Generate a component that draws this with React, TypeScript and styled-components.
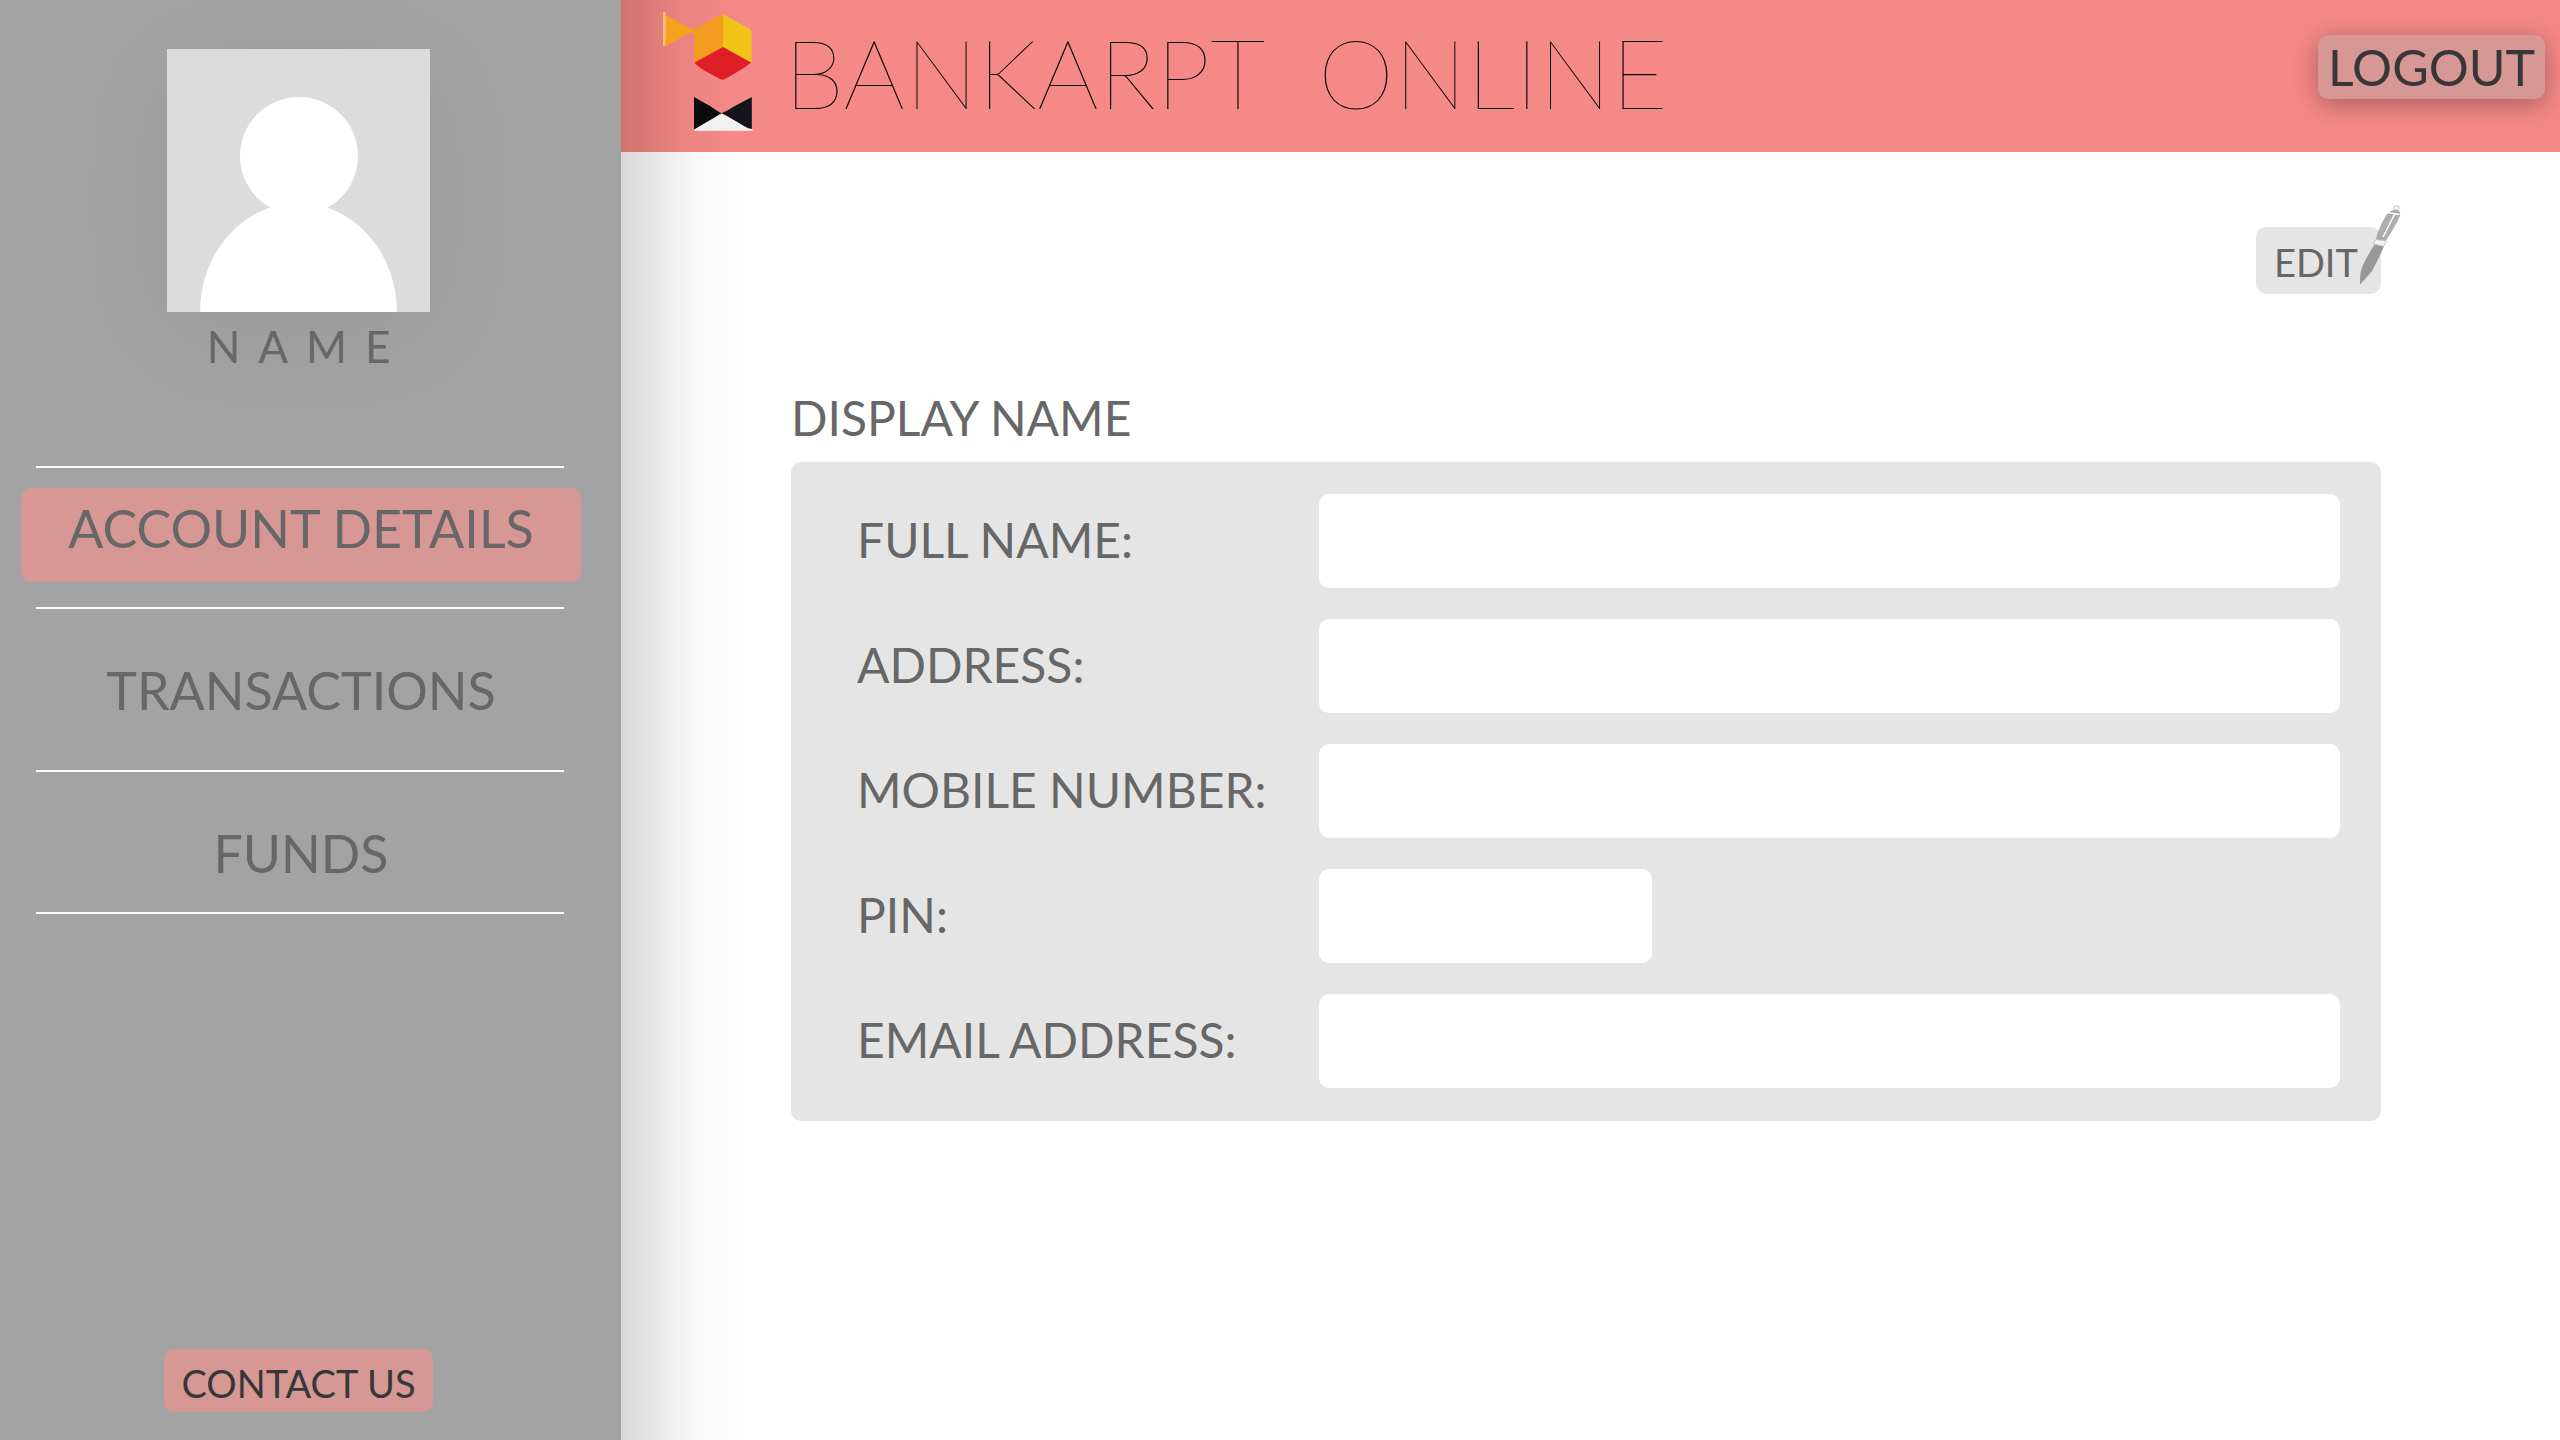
import React from "react";
import styled, { createGlobalStyle } from "styled-components";

const color = {
  side: "#a3a3a3",
  brand: "#f58987",
  accent: "#d69795",
  panel: "#e5e5e5",
  text: "#676767",
  dark: "#373737",
};

const edgeShade = `linear-gradient(
  to right,
  rgba(0, 0, 0, 0.155) 0,
  rgba(0, 0, 0, 0.12) 20px,
  rgba(0, 0, 0, 0.084) 40px,
  rgba(0, 0, 0, 0.048) 60px,
  rgba(0, 0, 0, 0.024) 80px,
  rgba(0, 0, 0, 0.01) 100px,
  rgba(0, 0, 0, 0) 130px
)`;

const GlobalStyle = createGlobalStyle`
  *, *::before, *::after { box-sizing: border-box; }
  body {
    margin: 0;
    background: #fff;
    color: ${color.text};
    font-family: Lato, "Open Sans", sans-serif;
  }
  button, input { font: inherit; color: inherit; border: 0; }
  button { cursor: pointer; }
`;

const Page = styled.div`
  display: grid;
  grid-template-columns: 621px minmax(0, 1fr);
  min-height: 100vh;
`;

const Sidebar = styled.aside`
  display: flex;
  flex-direction: column;
  align-items: center;
  padding: 49px 44px 28px 20px;
  background: ${color.side};
`;

const Avatar = styled.svg`
  display: block;
  width: 263px;
  height: 263px;
  background: #dcdcdc;
  box-shadow: 0 20px 110px rgba(0, 0, 0, 0.06);
`;

const UserName = styled.p`
  margin: 6px 0 92px;
  padding-left: 18px;
  font-size: 44px;
  line-height: 56px;
  letter-spacing: 18px;
`;

const Nav = styled.nav`
  align-self: stretch;
`;

const NavList = styled.ul`
  margin: 0 13px 0 16px;
  padding: 0;
  list-style: none;
  border-top: 2px solid #fff;
`;

const NavItem = styled.li<{ $above: number; $below: number }>`
  padding: ${(p) => p.$above}px 0 ${(p) => p.$below}px;
  border-bottom: 2px solid #fff;
`;

const NavLink = styled.a<{ $active?: boolean }>`
  display: block;
  height: 94px;
  margin: 0 -17px 0 -15px;
  border-radius: 10px;
  background: ${(p) => (p.$active ? color.accent : "transparent")};
  color: inherit;
  font-size: 52px;
  line-height: 80px;
  text-align: center;
  text-decoration: none;
`;

const Contact = styled.button`
  margin-top: auto;
  height: 63px;
  padding: 5px 17px 0;
  border-radius: 10px;
  background: ${color.accent};
  color: ${color.dark};
  font-size: 38px;
  line-height: 58px;
`;

const Column = styled.div`
  display: flex;
  flex-direction: column;
`;

const Header = styled.header`
  display: flex;
  align-items: center;
  height: 152px;
  padding: 0 15px 8px 42px;
  background: ${edgeShade}, ${color.brand};
`;

const Logo = styled.svg`
  flex: none;
  width: 90px;
  height: 120px;
`;

const Title = styled.h1`
  margin: 0 auto 0 31px;
  color: #000;
  font-size: 97px;
  font-weight: 100;
  line-height: 108px;
  white-space: pre;
`;

const Logout = styled.button`
  height: 64px;
  margin-bottom: 10px;
  padding: 0 10px;
  border-radius: 10px;
  background: ${color.accent};
  box-shadow: 0 5px 26px rgba(0, 0, 0, 0.32);
  color: ${color.dark};
  font-size: 50px;
  line-height: 64px;
`;

const Content = styled.main`
  flex: 1;
  display: flex;
  flex-direction: column;
  padding: 75px 179px 60px 170px;
  background: ${edgeShade}, #fff;
`;

const Edit = styled.button`
  position: relative;
  align-self: flex-end;
  width: 125px;
  height: 67px;
  padding: 0 0 0 18px;
  border-radius: 10px;
  background: ${color.panel};
  font-size: 38px;
  line-height: 70px;
  text-align: left;
`;

const Pen = styled.svg`
  position: absolute;
  right: -20px;
  bottom: 9px;
  width: 42px;
  height: 80px;
`;

const SectionTitle = styled.h2`
  margin: 93px 0 14px;
  font-size: 48px;
  font-weight: 400;
  line-height: 61px;
`;

const Form = styled.form`
  display: flex;
  flex-direction: column;
  gap: 31px;
  padding: 32px 41px 33px 66px;
  border-radius: 10px;
  background: ${color.panel};
`;

const Row = styled.div`
  display: grid;
  grid-template-columns: 462px minmax(0, 1fr);
  align-items: center;
`;

const Label = styled.label`
  padding-bottom: 2px;
  font-size: 48px;
  line-height: 60px;
`;

const Field = styled.input<{ $short?: boolean }>`
  width: ${(p) => (p.$short ? "333px" : "100%")};
  height: 94px;
  padding: 0 24px;
  border-radius: 10px;
  background: #fff;
  font-size: 48px;
`;

const navItems = [
  { label: "ACCOUNT DETAILS", active: true, above: 20, below: 25 },
  { label: "TRANSACTIONS", above: 41, below: 26 },
  { label: "FUNDS", above: 41, below: 5 },
];

const fields = [
  { id: "full-name", label: "FULL NAME:", type: "text" },
  { id: "address", label: "ADDRESS:", type: "text" },
  { id: "mobile", label: "MOBILE NUMBER:", type: "tel" },
  { id: "pin", label: "PIN:", type: "password", short: true },
  { id: "email", label: "EMAIL ADDRESS:", type: "email" },
];

export default function App() {
  return (
    <>
      <GlobalStyle />
      <Page>
        <Sidebar>
          <Avatar viewBox="0 0 263 263" aria-hidden="true">
            <g fill="#fff">
              <circle cx="132" cy="107" r="59" />
              <ellipse cx="131.5" cy="263" rx="98.5" ry="109" />
            </g>
          </Avatar>
          <UserName>NAME</UserName>
          <Nav>
            <NavList>
              {navItems.map((item) => (
                <NavItem key={item.label} $above={item.above} $below={item.below}>
                  <NavLink href="#" $active={item.active}>
                    {item.label}
                  </NavLink>
                </NavItem>
              ))}
            </NavList>
          </Nav>
          <Contact type="button">CONTACT US</Contact>
        </Sidebar>
        <Column>
          <Header>
            <Logo viewBox="13 12 90 120" aria-hidden="true">
              <path d="M13.5 13.5 Q28 22 44 30 L44 33 Q39 32 35 35 Q23 43 15 46 L13.5 46Z" fill="#f5a01f" />
              <path d="M13 12h2.4v3Q16.800 29 15 46H13Z" fill="#f8c07a" />
              <path d="M44 30 L66 17 Q71 14.500 73 14.500 L73 47 L44 62.500Z" fill="#f39c1f" />
              <path d="M73 14.500 Q75 15 78 17 L99 28.500 Q101.500 30 101.500 33 L101.500 62.500 L73 47Z" fill="#f0c417" />
              <path d="M44.500 62.500 L73 47 L101 62.500 Q96 67 88 71.500 L75 79 Q72.500 80.500 70 79 L56 71.500 Q48 67 44.500 62.500Z" fill="#df1f26" />
              <path d="M44 130.700 L44 129.500 L69 115 Q72 113.200 75 115 L95 126.500 Q98 128.500 102 129 L103 130.700Z" fill="#f2f2f2" />
              <path d="M44 97 L60 106 Q67 111 71.500 113.300 L44 129.500Z" fill="#0a0b0c" />
              <path d="M101.800 97 L101.800 129 Q98 128.500 94 126 L78 116.500 Q74 114 71.500 113.300 Q78 110.500 84 106.500Z" fill="#12151c" />
            </Logo>
            <Title>{"BANKARPT  ONLINE"}</Title>
            <Logout type="button">LOGOUT</Logout>
          </Header>
          <Content>
            <Edit type="button">
              EDIT
              <Pen viewBox="0 0 42 80" aria-hidden="true">
                <path d="M1 79.500 Q0.500 66 4.500 59 Q9 50 15.500 39.500 L25 41.500 Q20 53 13 66 Q10 70 1 79.500Z" fill="#989898" />
                <path d="M16.500 34.500 L27.500 36 L24.500 41 L14.500 39Z" fill="#f4f4f4" stroke="#c4c4c4" strokeWidth="1" />
                <path d="M17 34 Q20 22 27 10.500 Q32 3.500 38 4.500 Q42 6 41 11 Q36 22 27 35.500Z" fill="#989898" fillOpacity="0.8" />
                <path d="M28.500 7.500 L40.500 9.500 M35.500 9.500 L24 32" fill="none" stroke="#fff" strokeWidth="1.500" />
                <path d="M34.500 4.500 L36 1 L40 1.500 L38.500 5" fill="none" stroke="#cfcfcf" strokeWidth="1.200" />
              </Pen>
            </Edit>
            <SectionTitle>DISPLAY NAME</SectionTitle>
            <Form>
              {fields.map((f) => (
                <Row key={f.id}>
                  <Label htmlFor={f.id}>{f.label}</Label>
                  <Field id={f.id} type={f.type} $short={f.short} />
                </Row>
              ))}
            </Form>
          </Content>
        </Column>
      </Page>
    </>
  );
}
